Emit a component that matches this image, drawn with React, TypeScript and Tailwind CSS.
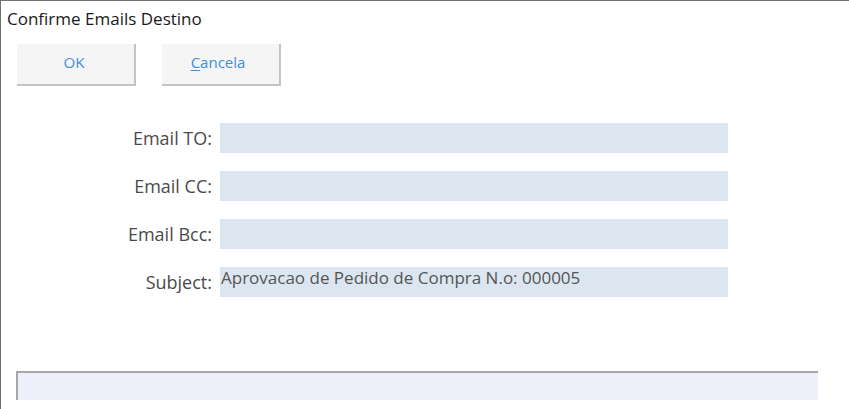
import React from 'react';

const fields = [
  { label: 'Email TO:', value: '' },
  { label: 'Email CC:', value: '' },
  { label: 'Email Bcc:', value: '' },
  { label: 'Subject:', value: 'Aprovacao de Pedido de Compra N.o: 000005' },
];

const App: React.FC = () => {
  return (
    <div
      className="w-[849px] h-[409px] bg-white border-t border-l border-[#707070] overflow-hidden text-[#1a1a1a]"
      style={{ fontFamily: '"Open Sans", "Noto Sans", sans-serif' }}
    >
      {/* Title */}
      <div className="pl-[6px] pt-[7px] text-[17px] leading-[22px]">Confirme Emails Destino</div>

      {/* Buttons */}
      <div className="flex gap-[26px] pl-[16px] pt-[14px]">
        <button className="w-[119px] h-[42px] bg-[#f5f5f5] border-r-2 border-b-2 border-[#c4c4c4] text-[15px] text-[#3d8fe3] pb-[4px] pr-[3px]">
          OK
        </button>
        <button className="w-[119px] h-[42px] bg-[#f5f5f5] border-r-2 border-b-2 border-[#c4c4c4] text-[15px] text-[#3d8fe3] pb-[4px] pr-[5px]">
          <span className="underline underline-offset-2">C</span>ancela
        </button>
      </div>

      {/* Fields */}
      <div className="flex flex-col gap-[18px] pt-[37px]">
        {fields.map((f) => (
          <div key={f.label} className="flex items-center">
            <div className="w-[211px] text-right text-[18px] text-[#4a4a4a] leading-[24px]">{f.label}</div>
            <div className="ml-[8px] w-[508px] h-[30px] bg-[#dce6f0] text-[17px] text-[#555555] leading-[22px] pl-[1px]">
              {f.value}
            </div>
          </div>
        ))}
      </div>

      {/* Bottom bar */}
      <div className="ml-[15px] mt-[74px] w-[802px] h-[29px] bg-[#eeeff9] border-t-2 border-l-2 border-[#a8a8a8]" />
    </div>
  );
};

export default App;
